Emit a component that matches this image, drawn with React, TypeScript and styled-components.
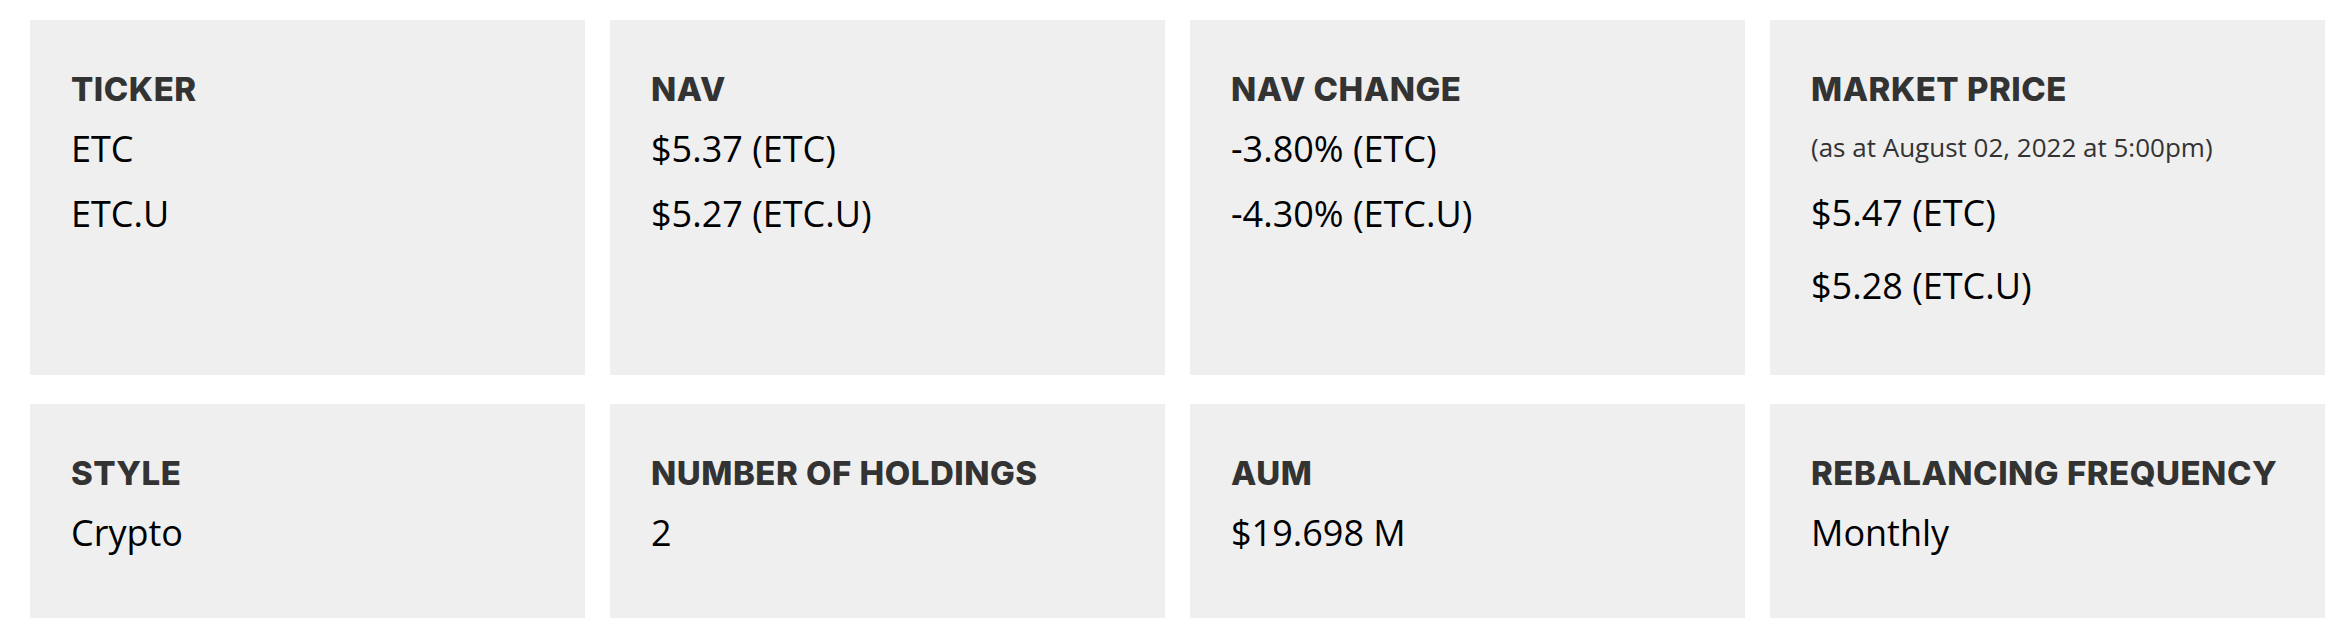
import React from "react";
import styled, { createGlobalStyle } from "styled-components";

type Stat = {
  label: string;
  note?: string;
  values: string[];
};

const stats: Stat[] = [
  { label: "TICKER", values: ["ETC", "ETC.U"] },
  { label: "NAV", values: ["$5.37 (ETC)", "$5.27 (ETC.U)"] },
  { label: "NAV CHANGE", values: ["-3.80% (ETC)", "-4.30% (ETC.U)"] },
  {
    label: "MARKET PRICE",
    note: "(as at August 02, 2022 at 5:00pm)",
    values: ["$5.47 (ETC)", "$5.28 (ETC.U)"],
  },
  { label: "STYLE", values: ["Crypto"] },
  { label: "NUMBER OF HOLDINGS", values: ["2"] },
  { label: "AUM", values: ["$19.698 M"] },
  { label: "REBALANCING FREQUENCY", values: ["Monthly"] },
];

const App = () => {
  return (
    <>
      <GlobalStyle />
      <Page>
        <StatGrid>
          {stats.map((stat) => (
            <StatCard key={stat.label}>
              <Label>{stat.label}</Label>
              {stat.note && <Note>{stat.note}</Note>}
              {stat.values.map((value) => (
                <Value key={value} $tall={!!stat.note}>
                  {value}
                </Value>
              ))}
            </StatCard>
          ))}
        </StatGrid>
      </Page>
    </>
  );
};

export default App;

const GlobalStyle = createGlobalStyle`
  html, body {
    margin: 0;
    padding: 0;
    background: #ffffff;
  }
`;

const Page = styled.div`
  padding: 20px 25px 26px 30px;
`;

const StatGrid = styled.div`
  display: grid;
  grid-template-columns: repeat(4, 1fr);
  gap: 29px 25px;
`;

const StatCard = styled.div`
  background-color: #efefef;
  padding: 49px 40px 53px 41px;
  display: flex;
  flex-direction: column;
  align-items: flex-start;
`;

const Label = styled.h3`
  margin: 0 0 7px;
  font-family: Inter, "Liberation Sans", sans-serif;
  font-weight: 800;
  font-size: 33px;
  line-height: 40px;
  letter-spacing: 0.5px;
  color: #333333;
`;

const Note = styled.p`
  margin: 13px 0 11px;
  font-family: "Open Sans", "Liberation Sans", sans-serif;
  font-size: 26px;
  line-height: 36px;
  color: #333333;
`;

const Value = styled.p<{ $tall?: boolean }>`
  margin: 0;
  font-family: "Open Sans", "Liberation Sans", sans-serif;
  font-size: 36px;
  line-height: ${(p) => (p.$tall ? "73px" : "65px")};
  color: #000000;
`;
